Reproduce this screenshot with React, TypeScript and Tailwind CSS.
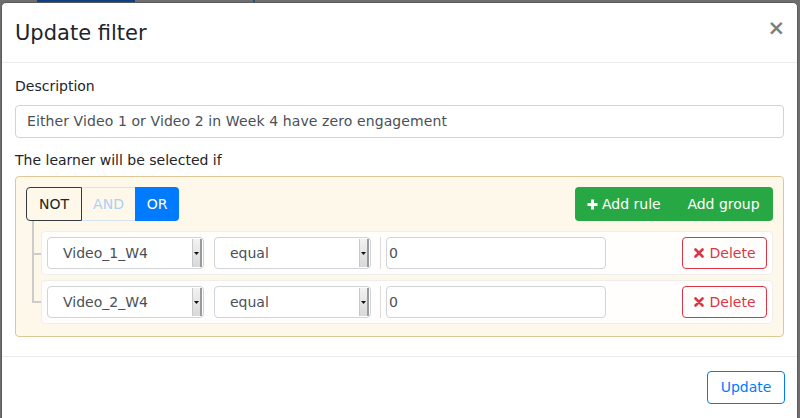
import React from 'react'

// native-looking select with the little gray drop button
function FakeSelect({ value }: { value: string }) {
  return (
    <div className="w-[157px] h-[32px] flex items-stretch bg-white border border-[#ced4da] rounded-[4px] overflow-hidden">
      <div className="flex-1 flex items-center pl-[15px] text-[#495057]">{value}</div>
      <div className="w-[10px] my-[1px] mr-[1px] flex items-center justify-center bg-gradient-to-b from-[#f2f2f2] to-[#d9d9d9] border-l border-[#c8c8c8] border-r-2 border-r-[#9a9a9a]">
        <svg width="5" height="3" viewBox="0 0 5 3">
          <path d="M0 0h5L2.5 3z" fill="#111" />
        </svg>
      </div>
    </div>
  )
}

function TimesIcon() {
  return (
    <svg width="10" height="10" viewBox="0 0 10 10">
      <path d="M1.5 1.5l7 7M8.5 1.5l-7 7" stroke="#dc3545" strokeWidth="2.6" strokeLinecap="round" />
    </svg>
  )
}

function RuleRow({ field }: { field: string }) {
  return (
    <div className="h-[44px] flex items-center px-[5px] bg-[#fffefc] border border-[#eeeeee] rounded-[4px]">
      <FakeSelect value={field} />
      <div className="w-[10px]" />
      <FakeSelect value="equal" />
      <div className="w-[1px] h-[32px] bg-[#dddddd] ml-[9px] mr-[5px]" />
      <div className="w-[220px] h-[32px] flex items-center pl-[2px] bg-white border border-[#ced4da] rounded-[4px] text-[#495057]">
        0
      </div>
      <div className="flex-1" />
      <button className="w-[85px] h-[32px] flex items-center justify-center gap-[6px] border border-[#dc3545] rounded-[4px] text-[#dc3545] bg-transparent">
        <TimesIcon />
        <span>Delete</span>
      </button>
    </div>
  )
}

export default function App() {
  return (
    <div
      className="w-[800px] h-[418px] bg-[#6e6e6e] overflow-hidden flex flex-col text-[14px] leading-[21px] text-[#212529]"
      style={{ fontFamily: '"DejaVu Sans", "Liberation Sans", sans-serif' }}
    >
      {/* bits of the page behind the backdrop */}
      <div className="h-[2px] flex shrink-0">
        <div className="w-[37px]" />
        <div className="w-[98px] bg-[#0b3f86]" />
        <div className="w-[118px]" />
        <div className="w-[2px] bg-[#1a4f9a]" />
      </div>

      <div className="ml-[1px] w-[797px] flex-1 bg-white border border-[#5a5a5a] border-b-0 rounded-t-[5px] flex flex-col">
        {/* header */}
        <div className="h-[60px] flex items-center justify-between px-[13px] border-b border-[#e9ecef]">
          <h4 className="text-[21px] leading-[30px] text-[#212529]">Update filter</h4>
          <span className="text-[21px] font-bold text-black opacity-50 leading-none -mr-[1px] -mt-[8px]">×</span>
        </div>

        {/* body */}
        <div className="px-[13px] pt-[13px] pb-[19px] border-b border-[#e9ecef]">
          <label className="block">Description</label>
          <div className="mt-[8px] h-[33px] flex items-center px-[11px] border border-[#ced4da] rounded-[4px] text-[#495057] tracking-[0.1px]">
            Either Video 1 or Video 2 in Week 4 have zero engagement
          </div>
          <label className="block mt-[12px]">The learner will be selected if</label>

          <div className="mt-[5px] h-[161px] p-[10px] bg-[#fdf8e9] border border-[#dcc896] rounded-[4px]">
            <div className="flex justify-between h-[34px]">
              <div className="flex">
                <div className="w-[56px] flex items-center justify-center border border-[#343a40] rounded-l-[4px] text-[#212529]">
                  NOT
                </div>
                <div className="w-[53px] flex items-center justify-center border-y border-[#d4e4f4] text-[#aed0f2]">
                  AND
                </div>
                <div className="w-[44px] flex items-center justify-center bg-[#007bff] rounded-r-[4px] text-white">
                  OR
                </div>
              </div>
              <div className="flex bg-[#28a745] rounded-[4px] text-white">
                <div className="w-[99px] flex items-center pl-[12px] gap-[4px]">
                  <svg width="11" height="11" viewBox="0 0 11 11">
                    <path d="M5.5 0.5v10M0.5 5.5h10" stroke="#fff" strokeWidth="3" />
                  </svg>
                  <span>Add rule</span>
                </div>
                <div className="w-[99px] flex items-center justify-center">Add group</div>
              </div>
            </div>

            <div className="relative ml-[15px] mt-[10px] flex flex-col gap-[5px]">
              <div className="absolute left-[-9px] top-[-10px] w-[2px] h-[82px] bg-[#cccccc]" />
              <div className="absolute left-[-9px] top-[22px] w-[9px] h-[2px] bg-[#cccccc]" />
              <div className="absolute left-[-9px] top-[70px] w-[9px] h-[2px] bg-[#cccccc]" />
              <RuleRow field="Video_1_W4" />
              <RuleRow field="Video_2_W4" />
            </div>
          </div>
        </div>

        {/* footer */}
        <div className="flex justify-end px-[12px] pt-[14px]">
          <button className="w-[78px] h-[33px] flex items-center justify-center border border-[#007bff] rounded-[4px] text-[#007bff]">
            Update
          </button>
        </div>
      </div>
    </div>
  )
}
